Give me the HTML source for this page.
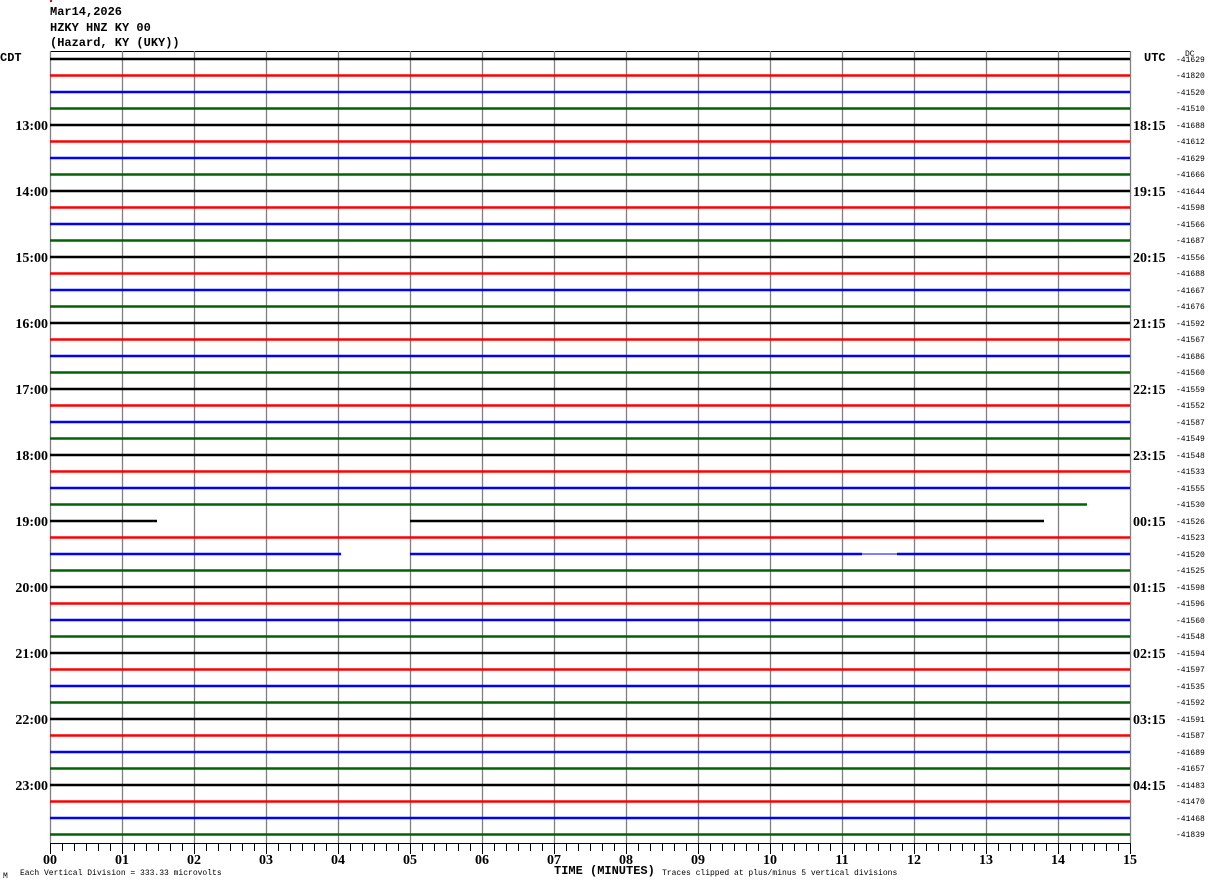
<!DOCTYPE html>
<html><head><meta charset="utf-8"><style>
html,body{margin:0;padding:0;background:#fff;width:1210px;height:886px;overflow:hidden}
svg{display:block}
.h{font-family:"Liberation Mono",monospace;font-size:12px;font-weight:bold;fill:#000}
.t{font-family:"Liberation Serif",serif;font-size:14px;font-weight:bold;fill:#000}
.n{font-family:"Liberation Mono",monospace;font-size:8px;fill:#000}
.s{font-family:"Liberation Mono",monospace;font-size:8px;fill:#000}
</style></head><body>
<svg width="1210" height="886" viewBox="0 0 1210 886" xmlns="http://www.w3.org/2000/svg">
<defs>
<pattern id="tk" x="50" y="0" width="12" height="886" patternUnits="userSpaceOnUse"><rect x="0" y="843" width="1" height="8" fill="#000"/></pattern>
</defs>
<rect x="50" y="0" width="2" height="2" fill="#f00"/>
<text class="h" x="50" y="15">Mar14,2026</text>
<text class="h" x="50" y="31">HZKY HNZ KY 00</text>
<text class="h" x="50" y="46">(Hazard, KY (UKY))</text>
<text class="h" x="0" y="61">CDT</text>
<text class="h" x="1144" y="61">UTC</text>
<text class="n" x="1185" y="56" font-size="7">DC</text>
<line x1="50" y1="51.5" x2="1130" y2="51.5" stroke="#000" stroke-width="1"/>
<g stroke="#808080" stroke-width="1.3">
<line x1="50.5" y1="51" x2="50.5" y2="843"/><line x1="122.5" y1="51" x2="122.5" y2="843"/><line x1="194.5" y1="51" x2="194.5" y2="843"/><line x1="266.5" y1="51" x2="266.5" y2="843"/><line x1="338.5" y1="51" x2="338.5" y2="843"/><line x1="410.5" y1="51" x2="410.5" y2="843"/><line x1="482.5" y1="51" x2="482.5" y2="843"/><line x1="554.5" y1="51" x2="554.5" y2="843"/><line x1="626.5" y1="51" x2="626.5" y2="843"/><line x1="698.5" y1="51" x2="698.5" y2="843"/><line x1="770.5" y1="51" x2="770.5" y2="843"/><line x1="842.5" y1="51" x2="842.5" y2="843"/><line x1="914.5" y1="51" x2="914.5" y2="843"/><line x1="986.5" y1="51" x2="986.5" y2="843"/><line x1="1058.5" y1="51" x2="1058.5" y2="843"/><line x1="1130.5" y1="51" x2="1130.5" y2="843"/>
</g>
<g stroke-width="2.6">
<g stroke="#000"><line x1="50" y1="59" x2="1130" y2="59"/><line x1="50" y1="125" x2="1130" y2="125"/><line x1="50" y1="191" x2="1130" y2="191"/><line x1="50" y1="257" x2="1130" y2="257"/><line x1="50" y1="323" x2="1130" y2="323"/><line x1="50" y1="389" x2="1130" y2="389"/><line x1="50" y1="455" x2="1130" y2="455"/><line x1="50" y1="521" x2="157" y2="521"/><line x1="410" y1="521" x2="1044" y2="521"/><line x1="50" y1="587" x2="1130" y2="587"/><line x1="50" y1="653" x2="1130" y2="653"/><line x1="50" y1="719" x2="1130" y2="719"/><line x1="50" y1="785" x2="1130" y2="785"/></g>
<g stroke="#f00"><line x1="50" y1="75.5" x2="1130" y2="75.5"/><line x1="50" y1="141.5" x2="1130" y2="141.5"/><line x1="50" y1="207.5" x2="1130" y2="207.5"/><line x1="50" y1="273.5" x2="1130" y2="273.5"/><line x1="50" y1="339.5" x2="1130" y2="339.5"/><line x1="50" y1="405.5" x2="1130" y2="405.5"/><line x1="50" y1="471.5" x2="1130" y2="471.5"/><line x1="50" y1="537.5" x2="1130" y2="537.5"/><line x1="50" y1="603.5" x2="1130" y2="603.5"/><line x1="50" y1="669.5" x2="1130" y2="669.5"/><line x1="50" y1="735.5" x2="1130" y2="735.5"/><line x1="50" y1="801.5" x2="1130" y2="801.5"/></g>
<g stroke="#00f"><line x1="50" y1="92" x2="1130" y2="92"/><line x1="50" y1="158" x2="1130" y2="158"/><line x1="50" y1="224" x2="1130" y2="224"/><line x1="50" y1="290" x2="1130" y2="290"/><line x1="50" y1="356" x2="1130" y2="356"/><line x1="50" y1="422" x2="1130" y2="422"/><line x1="50" y1="488" x2="1130" y2="488"/><line x1="50" y1="554" x2="341" y2="554"/><line x1="410" y1="554" x2="862" y2="554"/><line x1="897" y1="554" x2="1130" y2="554"/><line x1="50" y1="620" x2="1130" y2="620"/><line x1="50" y1="686" x2="1130" y2="686"/><line x1="50" y1="752" x2="1130" y2="752"/><line x1="50" y1="818" x2="1130" y2="818"/></g>
<g stroke="#006400"><line x1="50" y1="108.5" x2="1130" y2="108.5"/><line x1="50" y1="174.5" x2="1130" y2="174.5"/><line x1="50" y1="240.5" x2="1130" y2="240.5"/><line x1="50" y1="306.5" x2="1130" y2="306.5"/><line x1="50" y1="372.5" x2="1130" y2="372.5"/><line x1="50" y1="438.5" x2="1130" y2="438.5"/><line x1="50" y1="504.5" x2="1087" y2="504.5"/><line x1="50" y1="570.5" x2="1130" y2="570.5"/><line x1="50" y1="636.5" x2="1130" y2="636.5"/><line x1="50" y1="702.5" x2="1130" y2="702.5"/><line x1="50" y1="768.5" x2="1130" y2="768.5"/><line x1="50" y1="834.5" x2="1130" y2="834.5"/></g>
</g>
<line x1="862" y1="554" x2="897" y2="554" stroke="#00f" stroke-width="1"/>
<line x1="50" y1="843.5" x2="1131" y2="843.5" stroke="#000" stroke-width="1"/>
<rect x="50" y="843" width="1081" height="8" fill="url(#tk)"/>
<g fill="#000">
<rect x="50" y="843" width="1" height="11"/><rect x="122" y="843" width="1" height="11"/><rect x="194" y="843" width="1" height="11"/><rect x="266" y="843" width="1" height="11"/><rect x="338" y="843" width="1" height="11"/><rect x="410" y="843" width="1" height="11"/><rect x="482" y="843" width="1" height="11"/><rect x="554" y="843" width="1" height="11"/><rect x="626" y="843" width="1" height="11"/><rect x="698" y="843" width="1" height="11"/><rect x="770" y="843" width="1" height="11"/><rect x="842" y="843" width="1" height="11"/><rect x="914" y="843" width="1" height="11"/><rect x="986" y="843" width="1" height="11"/><rect x="1058" y="843" width="1" height="11"/><rect x="1130" y="843" width="1" height="11"/>
</g>
<g class="t" text-anchor="middle">
<text x="50" y="864">00</text><text x="122" y="864">01</text><text x="194" y="864">02</text><text x="266" y="864">03</text><text x="338" y="864">04</text><text x="410" y="864">05</text><text x="482" y="864">06</text><text x="554" y="864">07</text><text x="626" y="864">08</text><text x="698" y="864">09</text><text x="770" y="864">10</text><text x="842" y="864">11</text><text x="914" y="864">12</text><text x="986" y="864">13</text><text x="1058" y="864">14</text><text x="1130" y="864">15</text>
</g>
<text class="h" x="554" y="874">TIME (MINUTES)</text>
<text class="s" x="20" y="875">Each Vertical Division =  333.33 microvolts</text>
<text class="s" x="3" y="878" font-size="6">M</text>
<text class="s" x="662" y="875">Traces clipped at plus/minus 5 vertical divisions</text>
<g class="t" text-anchor="end">
<text x="48" y="130">13:00</text><text x="48" y="196">14:00</text><text x="48" y="262">15:00</text><text x="48" y="328">16:00</text><text x="48" y="394">17:00</text><text x="48" y="460">18:00</text><text x="48" y="526">19:00</text><text x="48" y="592">20:00</text><text x="48" y="658">21:00</text><text x="48" y="724">22:00</text><text x="48" y="790">23:00</text>
</g>
<g class="t">
<text x="1133" y="130">18:15</text><text x="1133" y="196">19:15</text><text x="1133" y="262">20:15</text><text x="1133" y="328">21:15</text><text x="1133" y="394">22:15</text><text x="1133" y="460">23:15</text><text x="1133" y="526">00:15</text><text x="1133" y="592">01:15</text><text x="1133" y="658">02:15</text><text x="1133" y="724">03:15</text><text x="1133" y="790">04:15</text>
</g>
<g class="n">
<text x="1176" y="62">-41629</text><text x="1176" y="78">-41820</text><text x="1176" y="95">-41520</text><text x="1176" y="111">-41510</text><text x="1176" y="128">-41688</text><text x="1176" y="144">-41612</text><text x="1176" y="161">-41629</text><text x="1176" y="177">-41666</text><text x="1176" y="194">-41644</text><text x="1176" y="210">-41598</text><text x="1176" y="227">-41566</text><text x="1176" y="243">-41687</text><text x="1176" y="260">-41556</text><text x="1176" y="276">-41688</text><text x="1176" y="293">-41667</text><text x="1176" y="309">-41676</text><text x="1176" y="326">-41592</text><text x="1176" y="342">-41567</text><text x="1176" y="359">-41686</text><text x="1176" y="375">-41560</text><text x="1176" y="392">-41559</text><text x="1176" y="408">-41552</text><text x="1176" y="425">-41587</text><text x="1176" y="441">-41549</text><text x="1176" y="458">-41548</text><text x="1176" y="474">-41533</text><text x="1176" y="491">-41555</text><text x="1176" y="507">-41530</text><text x="1176" y="524">-41526</text><text x="1176" y="540">-41523</text><text x="1176" y="557">-41520</text><text x="1176" y="573">-41525</text><text x="1176" y="590">-41598</text><text x="1176" y="606">-41596</text><text x="1176" y="623">-41560</text><text x="1176" y="639">-41548</text><text x="1176" y="656">-41594</text><text x="1176" y="672">-41597</text><text x="1176" y="689">-41535</text><text x="1176" y="705">-41592</text><text x="1176" y="722">-41591</text><text x="1176" y="738">-41587</text><text x="1176" y="755">-41689</text><text x="1176" y="771">-41657</text><text x="1176" y="788">-41483</text><text x="1176" y="804">-41470</text><text x="1176" y="821">-41468</text><text x="1176" y="837">-41839</text>
</g>
</svg>
</body></html>
